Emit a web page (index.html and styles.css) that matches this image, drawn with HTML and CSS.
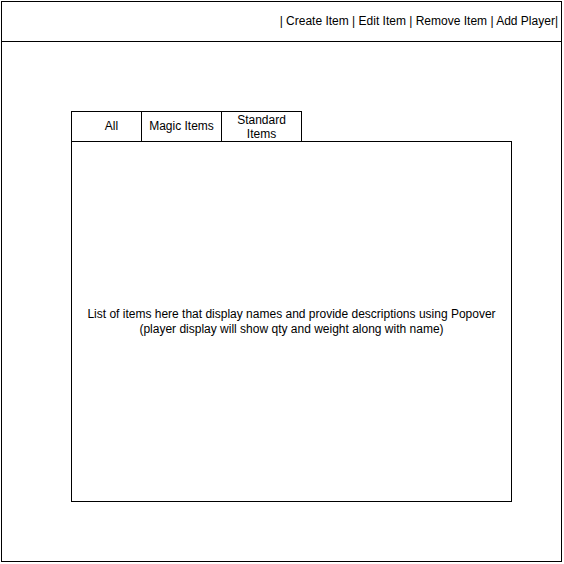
FILE: index.html
```html
<!DOCTYPE html>
<html>
<head>
<meta charset="utf-8">
<link rel="stylesheet" href="styles.css">
</head>
<body>
<div class="frame">
  <div class="header"><span class="nav">| Create Item | Edit Item | Remove Item | Add Player|</span></div>
  <div class="main">
    <div class="tabs">
      <div class="tab tab-all">All</div>
      <div class="tab tab-magic">Magic Items</div>
      <div class="tab tab-std">Standard<br>Items</div>
    </div>
    <div class="panel">
      <p class="desc">List of items here that display names and provide descriptions using Popover<br>(player display will show qty and weight along with name)</p>
    </div>
  </div>
</div>
</body>
</html>
```
FILE: styles.css
```css
html, body {
  margin: 0;
  padding: 0;
  background: #fff;
}
body {
  font-family: "Liberation Sans", Arial, sans-serif;
  font-size: 12px;
  color: #000;
}
.frame {
  margin: 1px 0 0 1px;
  width: 559px;
  height: 559px;
  border: 1px solid #000;
  display: flex;
  flex-direction: column;
}
.header {
  box-sizing: border-box;
  height: 40px;
  border-bottom: 1px solid #000;
  display: flex;
  align-items: center;
  justify-content: flex-end;
  padding: 0 3px 2px 0;
}
.nav {
  line-height: 14px;
  white-space: nowrap;
}
.main {
  padding: 69px 0 0 69px;
}
.tabs {
  display: flex;
  height: 30px;
}
.tab {
  box-sizing: border-box;
  height: 30px;
  border-top: 1px solid #000;
  border-left: 1px solid #000;
  display: flex;
  align-items: center;
  justify-content: center;
  text-align: center;
  line-height: 14px;
  padding-bottom: 1px;
}
.tab-all { width: 70px; padding-left: 10px; }
.tab-magic { width: 80px; }
.tab-std { width: 81px; border-right: 1px solid #000; padding-bottom: 0; }
.panel {
  box-sizing: border-box;
  width: 441px;
  height: 361px;
  border: 1px solid #000;
  display: flex;
  align-items: center;
  justify-content: center;
}
.desc {
  margin: 0;
  text-align: center;
  line-height: 15px;
}
```
